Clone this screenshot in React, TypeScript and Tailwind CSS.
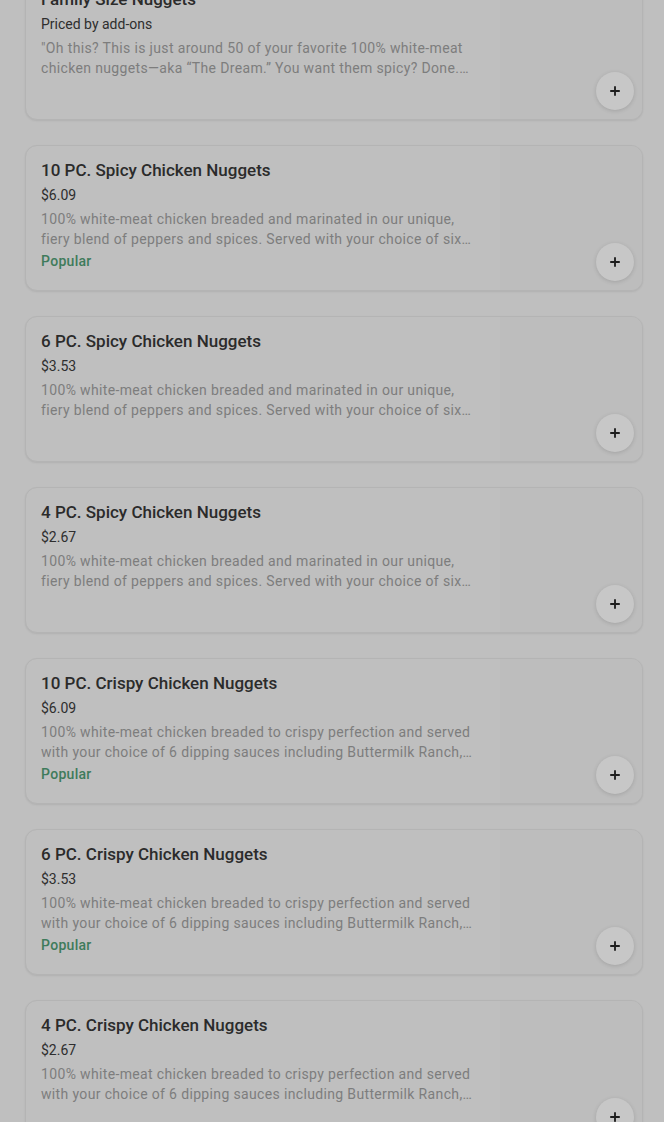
import { Plus } from 'lucide-react';

interface MenuItem {
  title: string;
  price: string;
  description: string;
  popular?: boolean;
}

const spicy =
  '100% white-meat chicken breaded and marinated in our unique, fiery blend of peppers and spices. Served with your choice of six dipping sauces including Buttermilk Ranch, Sweet and Spicy Chili and more.';
const crispy =
  '100% white-meat chicken breaded to crispy perfection and served with your choice of 6 dipping sauces including Buttermilk Ranch, Honey Mustard and more.';

const items: MenuItem[] = [
  {
    title: 'Family Size Nuggets',
    price: 'Priced by add-ons',
    description:
      '"Oh this? This is just around 50 of your favorite 100% white-meat chicken nuggets—aka “The Dream.” You want them spicy? Done. You want them crispy? Done.',
  },
  { title: '10 PC. Spicy Chicken Nuggets', price: '$6.09', description: spicy, popular: true },
  { title: '6 PC. Spicy Chicken Nuggets', price: '$3.53', description: spicy },
  { title: '4 PC. Spicy Chicken Nuggets', price: '$2.67', description: spicy },
  { title: '10 PC. Crispy Chicken Nuggets', price: '$6.09', description: crispy, popular: true },
  { title: '6 PC. Crispy Chicken Nuggets', price: '$3.53', description: crispy, popular: true },
  { title: '4 PC. Crispy Chicken Nuggets', price: '$2.67', description: crispy },
];

function ItemCard({ item }: { item: MenuItem }) {
  return (
    <div className="flex h-[146px] rounded-xl border border-[#b4b4b4] bg-[#bfbfbf] shadow-[0_1px_2px_rgba(0,0,0,0.08)] overflow-hidden">
      <div className="flex-1 min-w-0 pl-[15px] pr-[13px] pt-[12px]">
        <div className="text-[17px] leading-[24px] font-medium text-[#2b2b2b]">{item.title}</div>
        <div className="mt-[3px] text-[14px] leading-[20px] text-[#2e2e2e]">{item.price}</div>
        <p className="mt-[4px] text-[14px] leading-[20px] tracking-[0.35px] text-[#7d7d7d] line-clamp-2">
          {item.description}
        </p>
        {item.popular && (
          <div className="mt-[2px] text-[14px] leading-[20px] font-medium tracking-[0.3px] text-[#3e7b5b]">
            Popular
          </div>
        )}
      </div>
      <div className="relative w-[142px] shrink-0 bg-[#bdbdbd]">
        <button className="absolute right-[8px] bottom-[9px] flex size-[38px] items-center justify-center rounded-full bg-[#c7c7c7] shadow-[0_1px_4px_rgba(0,0,0,0.14)]">
          <Plus className="size-[14px] text-[#1e1e1e]" strokeWidth={3.2} />
        </button>
      </div>
    </div>
  );
}

export default function App() {
  return (
    <div className="h-[1122px] overflow-hidden bg-[#bfbfbf] font-['Roboto',sans-serif]">
      <div className="mt-[-26px] flex flex-col gap-[25px] pl-[25px] pr-[21px]">
        {items.map((item) => (
          <ItemCard key={item.title} item={item} />
        ))}
      </div>
    </div>
  );
}
